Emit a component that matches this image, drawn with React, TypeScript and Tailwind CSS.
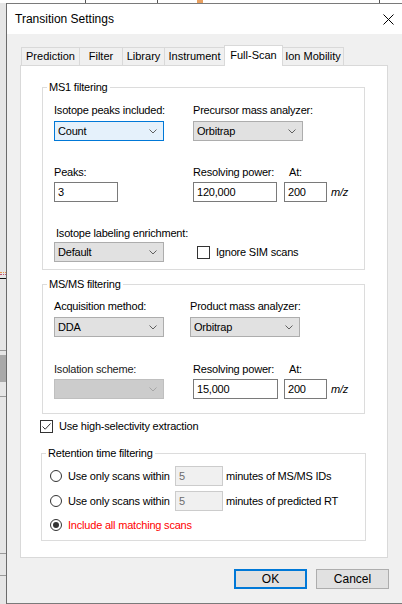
import type { ReactNode } from 'react'

function Chevron({ disabled }: { disabled?: boolean }) {
  return (
    <svg width="8" height="5" viewBox="0 0 8 5" className="shrink-0">
      <path d="M0.5 0.5 L4 4 L7.5 0.5" fill="none" stroke={disabled ? '#a6a6a6' : '#606060'} strokeWidth="1" />
    </svg>
  )
}

function Combo({ value, focused, disabled, className = '' }: { value?: string; focused?: boolean; disabled?: boolean; className?: string }) {
  const tone = disabled
    ? 'bg-[#cccccc] border-[#bfbfbf]'
    : focused
      ? 'bg-[#e5f1fb] border-[#0078d7]'
      : 'bg-[#e1e1e1] border-[#adadad]'
  return (
    <div className={`w-[110px] h-[20px] border ${tone} flex items-center pl-[3px] pr-[6px] ${className}`}>
      <span className="flex-1 leading-[14px]">{value}</span>
      <Chevron disabled={disabled} />
    </div>
  )
}

function TextBox({ value, className = '', disabled }: { value: string; className?: string; disabled?: boolean }) {
  const tone = disabled ? 'bg-[#f0f0f0] border-[#cccccc] text-[#6d6d6d]' : 'bg-white border-[#7a7a7a]'
  return (
    <div className={`h-[20px] border ${tone} flex items-center pl-[3px] leading-[14px] ${className}`}>
      {value}
    </div>
  )
}

function Checkbox({ checked }: { checked?: boolean }) {
  return (
    <div className="w-[13px] h-[13px] border border-[#333333] bg-white flex items-center justify-center shrink-0">
      {checked && (
        <svg width="11" height="11" viewBox="0 0 11 11">
          <path d="M1.5 5.5 L4.2 8.2 L9.5 2.5" fill="none" stroke="#333333" strokeWidth="1" />
        </svg>
      )}
    </div>
  )
}

function Radio({ checked }: { checked?: boolean }) {
  return (
    <div className="w-[12px] h-[12px] rounded-full border border-[#333333] bg-white flex items-center justify-center shrink-0">
      {checked && <div className="w-[6px] h-[6px] rounded-full bg-[#333333]" />}
    </div>
  )
}

function Group({ title, className = '', children }: { title: string; className?: string; children: ReactNode }) {
  return (
    <fieldset className={`border border-[#dcdcdc] ${className}`}>
      <legend className="ml-[4px] px-[2px] leading-[14px]">{title}</legend>
      {children}
    </fieldset>
  )
}

const Label = ({ children, className = '' }: { children: ReactNode; className?: string }) => (
  <div className={`leading-[14px] whitespace-nowrap ${className}`}>{children}</div>
)

const TABS = [
  { name: 'Prediction', w: 'w-[58px]' },
  { name: 'Filter', w: 'w-[43px]' },
  { name: 'Library', w: 'w-[42px]' },
  { name: 'Instrument', w: 'w-[60px]' },
  { name: 'Full-Scan', w: 'w-[59px]', active: true },
  { name: 'Ion Mobility', w: 'w-[61px]' },
]

export default function App() {
  return (
    <div className="w-[402px] h-[604px] overflow-hidden flex flex-col bg-[#f0f0f0] text-black text-[11px] tracking-[-0.2px] font-['Liberation_Sans',Arial,sans-serif]">
      {/* app behind the dialog */}
      <div className="h-[3px] bg-white flex shrink-0">
        <div className="w-[86px] border-r border-[#555555]" />
        <div className="w-[72px] border-r border-[#555555]" />
        <div className="w-[39px]" />
        <div className="w-[6px] bg-[#e8a060]" />
        <div className="w-[177px] border-r border-[#555555]" />
      </div>

      <div className="flex flex-1 min-h-0">
        <div className="w-[7px] shrink-0 bg-[#e6e6e6] border-r border-[#6b6b6b] flex flex-col">
          <div className="h-[269px]" />
          <div className="h-[2px] border-t border-dotted border-[#e8964a]" />
          <div className="h-[4px] border-t border-dotted border-[#c05070]" />
          <div className="h-[2px] border-t border-[#111111]" />
          <div className="h-[70px]" />
          <div className="h-[5px] border-t border-[#9a9a9a]" />
          <div className="h-[27px] bg-[#a9a9a9]" />
          <div className="h-[14px]" />
          <div className="h-[157px] border-t border-[#9a9a9a]" />
          <div className="h-[22px] border-t border-[#9a9a9a]" />
          <div className="flex-1 border-t border-[#9a9a9a]" />
        </div>

        {/* dialog */}
        <div className="flex-1 flex flex-col border-t border-b border-[#7a7a7a] bg-[#f0f0f0]">
          <div className="h-[30px] bg-white flex items-center pl-[8px] shrink-0">
            <span className="text-[12px] tracking-normal">Transition Settings</span>
            <svg width="11" height="11" viewBox="0 0 11 11" className="ml-auto mr-[8px]">
              <path d="M0.5 0.5 L10.5 10.5 M10.5 0.5 L0.5 10.5" stroke="#000000" strokeWidth="1" />
            </svg>
          </div>

          <div className="pt-[11px] ml-[13px] w-[368px]">
            {/* tabs */}
            <div className="flex items-end ml-[1px] h-[20px] tracking-normal">
              {TABS.map((t, i) =>
                t.active ? (
                  <div key={t.name} className={`${t.w} h-[21px] -mb-[1px] relative z-10 bg-white border-t border-l border-r border-[#d9d9d9] flex items-center justify-center pb-[2px]`}>
                    {t.name}
                  </div>
                ) : (
                  <div
                    key={t.name}
                    className={`${t.w} h-[18px] bg-[#f0f0f0] border-t border-[#d9d9d9] flex items-center justify-center ${i === TABS.length - 1 ? 'border-r' : 'border-l'}`}
                  >
                    {t.name}
                  </div>
                ),
              )}
            </div>

            {/* tab page */}
            <div className="h-[493px] bg-white border border-[#d9d9d9] flex flex-col">
              <Group title="MS1 filtering" className="mt-[14px] ml-[21px] w-[323px]">
                <div className="pl-[11px] pt-[9px] pb-[7px]">
                  <div className="flex">
                    <div className="w-[139px]">
                      <Label>Isotope peaks included:</Label>
                      <Combo className="mt-[4px]" value="Count" focused />
                    </div>
                    <div>
                      <Label>Precursor mass analyzer:</Label>
                      <Combo className="mt-[4px]" value="Orbitrap" />
                    </div>
                  </div>

                  <div className="flex mt-[24px]">
                    <div className="w-[139px]">
                      <Label>Peaks:</Label>
                      <TextBox className="mt-[3px] w-[64px]" value="3" />
                    </div>
                    <div className="flex">
                      <div>
                        <Label>Resolving power:</Label>
                        <TextBox className="mt-[3px] w-[84px]" value="120,000" />
                      </div>
                      <div className="ml-[7px]">
                        <Label className="pl-[5px]">At:</Label>
                        <div className="mt-[3px] flex items-center">
                          <TextBox className="w-[43px]" value="200" />
                          <span className="ml-[4px] italic">m/z</span>
                        </div>
                      </div>
                    </div>
                  </div>

                  <div className="flex items-end mt-[24px]">
                    <div className="w-[143px]">
                      <Label className="pl-[2px]">Isotope labeling enrichment:</Label>
                      <Combo className="mt-[2px]" value="Default" />
                    </div>
                    <div className="h-[20px] flex items-center">
                      <Checkbox />
                      <span className="ml-[6px] leading-[14px]">Ignore SIM scans</span>
                    </div>
                  </div>
                </div>
              </Group>

              <Group title="MS/MS filtering" className="mt-[7px] ml-[21px] w-[323px]">
                <div className="pl-[11px] pt-[8px] pb-[14px]">
                  <div className="flex">
                    <div className="w-[136px]">
                      <Label>Acquisition method:</Label>
                      <Combo className="mt-[4px]" value="DDA" />
                    </div>
                    <div>
                      <Label>Product mass analyzer:</Label>
                      <Combo className="mt-[4px]" value="Orbitrap" />
                    </div>
                  </div>

                  <div className="flex mt-[25px]">
                    <div className="w-[139px]">
                      <Label className="text-[#222222]">Isolation scheme:</Label>
                      <Combo className="mt-[3px]" disabled />
                    </div>
                    <div className="flex">
                      <div>
                        <Label>Resolving power:</Label>
                        <TextBox className="mt-[3px] w-[85px]" value="15,000" />
                      </div>
                      <div className="ml-[6px]">
                        <Label className="pl-[5px]">At:</Label>
                        <div className="mt-[3px] flex items-center">
                          <TextBox className="w-[43px]" value="200" />
                          <span className="ml-[4px] italic">m/z</span>
                        </div>
                      </div>
                    </div>
                  </div>
                </div>
              </Group>

              <div className="mt-[5px] ml-[19px] h-[14px] flex items-center">
                <Checkbox checked />
                <span className="ml-[6px] leading-[14px]">Use high-selectivity extraction</span>
              </div>

              <Group title="Retention time filtering" className="mt-[13px] ml-[20px] w-[325px]">
                <div className="pl-[8px] pt-[6px] pb-[8px]">
                  <div className="flex items-center h-[20px]">
                    <Radio />
                    <span className="ml-[6px] w-[107px] leading-[14px] whitespace-nowrap">Use only scans within</span>
                    <TextBox className="w-[48px]" value="5" disabled />
                    <span className="ml-[3px] leading-[14px] whitespace-nowrap">minutes of MS/MS IDs</span>
                  </div>
                  <div className="flex items-center h-[20px] mt-[5px]">
                    <Radio />
                    <span className="ml-[6px] w-[107px] leading-[14px] whitespace-nowrap">Use only scans within</span>
                    <TextBox className="w-[48px]" value="5" disabled />
                    <span className="ml-[3px] leading-[14px] whitespace-nowrap">minutes of predicted RT</span>
                  </div>
                  <div className="flex items-center h-[14px] mt-[7px]">
                    <Radio checked />
                    <span className="ml-[6px] leading-[14px] text-[#ff0000]">Include all matching scans</span>
                  </div>
                </div>
              </Group>
            </div>

            {/* buttons */}
            <div className="mt-[11px] flex justify-end gap-[9px] mr-[-1px] tracking-normal text-[12px]">
              <button className="w-[73px] h-[20px] border-2 border-[#0078d7] bg-[#e1e1e1] flex items-center justify-center leading-[14px]">
                OK
              </button>
              <button className="w-[73px] h-[20px] border border-[#adadad] bg-[#e1e1e1] flex items-center justify-center leading-[14px]">
                Cancel
              </button>
            </div>
          </div>
        </div>
      </div>
    </div>
  )
}
